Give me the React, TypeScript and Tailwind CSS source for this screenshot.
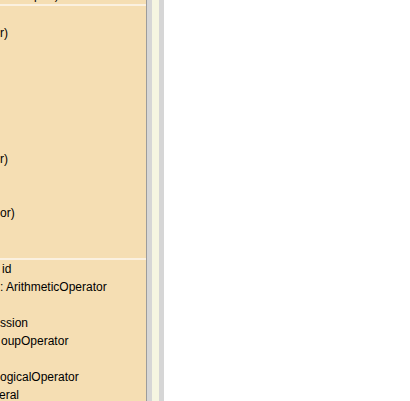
import React from 'react';

// rows of the (horizontally scrolled) class box; null = empty row
const upperRows: (string | null)[] = [
  null,
  'r)',
  null,
  null,
  null,
  null,
  null,
  null,
  'r)',
  null,
  null,
  'or)',
  null,
  null,
];

const lowerRows: { text: string | null; pad?: string }[] = [
  { text: 'id', pad: 'pl-[2px]' },
  { text: ': ArithmeticOperator' },
  { text: null },
  { text: 'ssion' },
  { text: 'oupOperator', pad: 'pl-px' },
  { text: null },
  { text: 'ogicalOperator' },
  { text: 'eral', pad: '-ml-px' },
];

function Row({ text, pad = '' }: { text: string | null; pad?: string }) {
  return (
    <div className={`h-[18px] shrink-0 leading-[18px] whitespace-nowrap ${pad}`}>
      {text ?? '\u00a0'}
    </div>
  );
}

export default function App() {
  return (
    <div
      className="flex h-[401px] w-[410px] overflow-hidden bg-white text-[12px] text-black"
      style={{ fontFamily: '"Liberation Sans", Arial, sans-serif' }}
    >
      {/* class box, scrolled */}
      <div className="flex w-[146px] shrink-0 flex-col overflow-hidden bg-[#f5deb3]">
        <div className="-mt-[14px] shrink-0">
          <Row text="ural report)" />
        </div>
        <div className="h-[2px] shrink-0 bg-[#fbf1e0]" />
        {upperRows.map((t, i) => (
          <Row key={`u-${i}`} text={t} />
        ))}
        <div className="h-[2px] shrink-0 bg-[#fbf1e0]" />
        {lowerRows.map((r, i) => (
          <Row key={`l-${i}`} text={r.text} pad={r.pad} />
        ))}
      </div>

      {/* scroll bar edge */}
      <div className="w-px shrink-0 bg-[#9c9c9c]" />
      <div className="w-[5px] shrink-0 bg-[#d6d6d6]" />
      <div className="w-[7px] shrink-0 bg-[#f5f5e1]" />
      <div className="w-[5px] shrink-0 bg-[#d6d6d6]" />
      <div className="flex-1 bg-white" />
    </div>
  );
}
